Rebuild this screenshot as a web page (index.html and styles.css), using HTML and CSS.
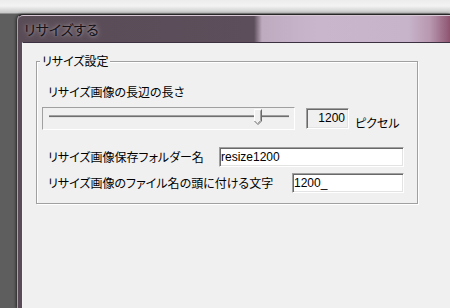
FILE: index.html
```html
<!DOCTYPE html>
<html lang="ja">
<head>
 <meta charset="UTF-8">
 <title>リサイズする</title>
 <link rel="stylesheet" href="styles.css">
</head>
<body>
 <div class="window">
   <div class="titlebar">リサイズする</div>
   <div class="client">
     <div class="group">
       <div class="group-title">リサイズ設定</div>
       <div class="label first">リサイズ画像の長辺の長さ</div>
       <div class="slider-row">
         <div class="slider">
           <div class="track track-left"></div>
           <svg class="thumb" width="8" height="17" viewBox="0 0 8 17">
             <polygon points="0.5,0.5 7.5,0.5 7.5,12 4,15.5 0.5,12" fill="#f0f0f0"/>
             <polyline points="0.5,12 0.5,0.5 7.5,0.5" fill="none" stroke="#ffffff"/>
             <polyline points="7.5,0.5 7.5,12 4,15.5 0.5,12" fill="none" stroke="#696969"/>
             <polyline points="6.5,1.5 6.5,11.5 4,14" fill="none" stroke="#a0a0a0"/>
           </svg>
           <div class="track track-right"></div>
         </div>
         <div class="number">1200</div>
         <span class="unit">ピクセル</span>
       </div>
       <div class="row">
         <label class="label">リサイズ画像保存フォルダー名</label>
         <input class="text-input folder" type="text" value="resize1200">
       </div>
       <div class="row row-last">
         <label class="label">リサイズ画像のファイル名の頭に付ける文字</label>
         <input class="text-input prefix" type="text" value="1200_">
       </div>
     </div>
   </div>
 </div>
</body>
</html>
```

FILE: styles.css
```css
html, body {
height: 100%;
}
body {
margin: 0;
padding-top: 14px;
box-sizing: border-box;
overflow: hidden;
font-family: 'Noto Sans CJK JP', sans-serif;
font-feature-settings: "palt";
font-size: 12px;
color: #000;
background: linear-gradient(#ececec 0, #f3f3f3 6px, #c6c6c6 13px, #5e5e5e 14px);
}
.window {
margin-left: 17px;
height: 293px;
overflow: hidden;
border-top: 1px solid #262626;
border-left: 1px solid #a9a0a8;
border-top-left-radius: 6px;
background: #5a4b58;
box-shadow: -1px 0 3px rgba(0, 0, 0, 0.6);
}
.titlebar {
height: 26px;
line-height: 26px;
padding-left: 6px;
border-top: 1px solid #d8c8d6;
border-top-left-radius: 5px;
font-size: 14px;
color: #151015;
text-shadow: 0 0 6px rgba(255, 255, 255, 0.45), 0 0 3px rgba(255, 255, 255, 0.35);
background: linear-gradient(to right, #5a4c57 0, #5c4e5a 236px, #bfabc0 244px, #c9b6cd 300px, #c7b4cb 390px, #b898b0 412px, #8e5470 432px);
}
.client {
margin-left: 4px;
height: 266px;
border-top: 1px solid #3a3040;
border-left: 1px solid #f4f4f4;
background: #f0f0f0;
padding-top: 18px;
box-sizing: border-box;
}
.group {
margin-left: 13px;
width: 382px;
height: 143px;
box-sizing: border-box;
border: 1px solid #a0a0a0;
box-shadow: 1px 1px 0 #ffffff, inset 1px 1px 0 #ffffff;
}
.group-title {
display: table;
margin: -8px 0 0 3px;
padding: 0 2px;
line-height: 14px;
background: #f0f0f0;
}
.label {
line-height: 14px;
white-space: nowrap;
}
.label.first {
margin: 17px 0 0 11px;
}
.slider-row {
display: flex;
align-items: center;
margin: 8px 0 0 5px;
}
.slider {
display: flex;
align-items: flex-start;
width: 253px;
height: 23px;
box-sizing: border-box;
padding: 0 5px 0 6px;
border: 1px solid;
border-color: #a0a0a0 #ffffff #ffffff #a0a0a0;
}
.track {
height: 1px;
margin-top: 7px;
background: #6f6f6f;
border-top: 1px solid #a0a0a0;
border-bottom: 1px solid #e3e3e3;
}
.track-left {
width: 205px;
}
.track-right {
flex: 1;
}
.thumb {
display: block;
margin-top: 1px;
}
.number {
width: 43px;
height: 21px;
margin-left: 11px;
box-sizing: border-box;
padding-right: 3px;
border: 1px solid;
border-color: #a0a0a0 #ffffff #ffffff #a0a0a0;
box-shadow: inset 1px 1px 0 #696969, inset -1px -1px 0 #e3e3e3;
font-family: 'Liberation Sans', sans-serif;
font-size: 12px;
line-height: 19px;
text-align: right;
}
.unit {
align-self: flex-end;
margin-left: 6px;
line-height: 14px;
}
.row {
display: flex;
align-items: center;
margin: 17px 13px 0 11px;
height: 20px;
}
.row-last {
margin-top: 6px;
}
.text-input {
margin: 0 0 0 auto;
height: 20px;
box-sizing: border-box;
padding: 0 0 0 1px;
border: 1px solid;
border-color: #a0a0a0 #ffffff #ffffff #a0a0a0;
box-shadow: inset 1px 1px 0 #696969, inset -1px -1px 0 #e3e3e3;
background: #ffffff;
font-family: 'Liberation Sans', sans-serif;
font-size: 12px;
color: #000;
outline: none;
}
.folder {
width: 185px;
}
.prefix {
width: 112px;
}
```
